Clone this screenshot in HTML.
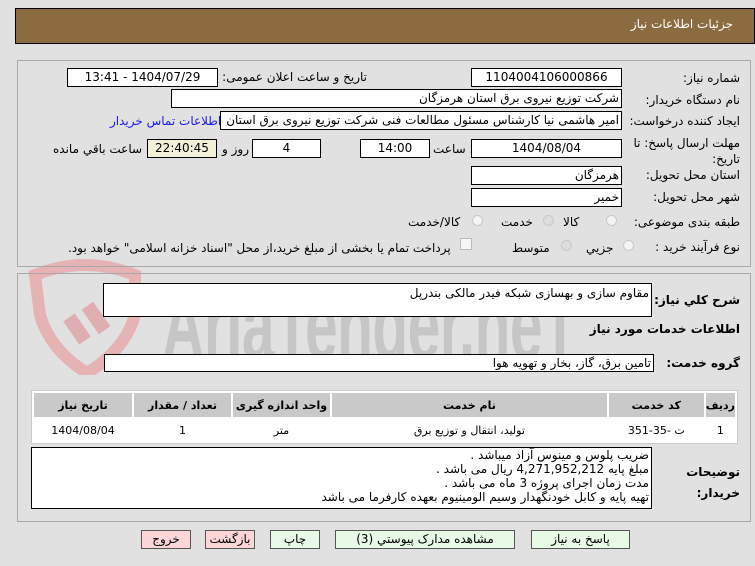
<!DOCTYPE html>
<html><head><meta charset="utf-8">
<style>
body{margin:0;width:755px;height:566px;background:#e1e1e1;position:relative;overflow:hidden;font-family:Tahoma,"DejaVu Sans","Liberation Sans",sans-serif;font-size:12px;color:#000}
.a{position:absolute}
.box{position:absolute;background:#fff;border:1px solid #000;box-sizing:border-box;direction:rtl;text-align:center;line-height:16px;font-size:12px;white-space:nowrap;overflow:hidden}
.l{position:absolute;direction:rtl;white-space:nowrap;font-size:12px}
.panel{position:absolute;border:1px solid #a8a8a8;box-sizing:border-box}
.rad{position:absolute;width:11px;height:11px;border:1px solid #c8c8c8;border-radius:50%;background:#f4f4f4;box-sizing:border-box}
.btn{position:absolute;border:1px solid #555;box-sizing:border-box;text-align:center;line-height:17px;font-size:12px;direction:rtl}
table{border-collapse:separate;border-spacing:2px;position:absolute;background:#fff;border:1px solid #c8c8c8}
td{text-align:center;font-size:11px;height:22px;padding:0}
th{background:#c9c9c9;font-size:11px;height:24px;padding:0}
</style></head><body>
<div class="a" style="left:15px;top:8px;width:740px;height:36px;background:#8b6b40;border:1px solid #000;box-sizing:border-box"></div>
<div class="l" style="right:22px;top:17px;color:#fff">جزئیات اطلاعات نیاز</div>

<!-- watermark -->
<svg class="a" style="left:25px;top:255px" width="130" height="120" viewBox="0 0 130 120">
<path d="M10 20 Q60 0 110 20 L110 60 Q100 95 62 118 Q25 95 15 60 Z" fill="none" stroke="#e6b3b5" stroke-width="12"/>
<rect x="45" y="60" width="14" height="28" fill="#dfaeb0" transform="rotate(-35 52 74)"/>
<rect x="64" y="48" width="14" height="30" fill="#dfaeb0" transform="rotate(-35 71 63)"/>
</svg>
<div class="a" style="left:162px;top:276px;font-family:'Liberation Sans',sans-serif;font-size:98px;line-height:1;font-weight:bold;color:#c6c6c6;letter-spacing:-1px;transform:scaleX(0.6);transform-origin:left top">AriaTender.neT</div>

<div class="panel" style="left:17px;top:60px;width:734px;height:207px"></div>
<div class="l" style="right:15px;top:71px">شماره نیاز:</div>
<div class="box" style="left:471px;top:68px;width:151px;height:19px">1104004106000866</div>
<div class="l" style="right:388px;top:70px">تاریخ و ساعت اعلان عمومی:</div>
<div class="box" style="left:67px;top:68px;width:151px;height:19px">1404/07/29 - 13:41</div>

<div class="l" style="right:15px;top:93px">نام دستگاه خریدار:</div>
<div class="box" style="left:171px;top:89px;width:451px;height:19px;text-align:right;padding-right:2px">شرکت توزیع نیروی برق استان هرمزگان</div>

<div class="l" style="right:15px;top:114px">ایجاد کننده درخواست:</div>
<div class="box" style="left:220px;top:111px;width:402px;height:19px;text-align:right;padding-right:2px">امیر هاشمی نیا کارشناس مسئول مطالعات فنی شرکت توزیع نیروی برق استان</div>
<div class="l" style="left:110px;top:114px;color:#1a1ae6">اطلاعات تماس خریدار</div>

<div class="l" style="right:15px;top:136px">مهلت ارسال پاسخ: تا</div>
<div class="l" style="right:15px;top:152px">تاریخ:</div>
<div class="box" style="left:471px;top:139px;width:151px;height:19px">1404/08/04</div>
<div class="l" style="left:433px;top:142px">ساعت</div>
<div class="box" style="left:360px;top:139px;width:70px;height:19px">14:00</div>
<div class="box" style="left:252px;top:139px;width:69px;height:19px">4</div>
<div class="l" style="left:222px;top:142px">روز و</div>
<div class="box" style="left:147px;top:139px;width:70px;height:19px;background:#f2f0d6">22:40:45</div>
<div class="l" style="left:53px;top:142px">ساعت باقي مانده</div>

<div class="l" style="right:15px;top:168px">استان محل تحویل:</div>
<div class="box" style="left:471px;top:166px;width:151px;height:19px;text-align:right;padding-right:2px">هرمزگان</div>
<div class="l" style="right:15px;top:190px">شهر محل تحویل:</div>
<div class="box" style="left:471px;top:188px;width:151px;height:19px;text-align:right;padding-right:2px">خمیر</div>

<div class="l" style="right:15px;top:215px">طبقه بندی موضوعی:</div>
<div class="rad" style="left:606px;top:215px"></div><div class="l" style="left:563px;top:215px">کالا</div>
<div class="rad" style="left:543px;top:215px;background:#ddd"></div><div class="l" style="left:501px;top:215px">خدمت</div>
<div class="rad" style="left:472px;top:215px"></div><div class="l" style="left:408px;top:215px">کالا/خدمت</div>

<div class="l" style="right:15px;top:240px">نوع فرآیند خرید :</div>
<div class="rad" style="left:623px;top:240px"></div><div class="l" style="left:586px;top:241px">جزيي</div>
<div class="rad" style="left:561px;top:240px;background:#ddd"></div><div class="l" style="left:512px;top:241px">متوسط</div>
<div class="a" style="left:460px;top:238px;width:12px;height:12px;border:1px solid #bbb;background:#f6f6f6;box-sizing:border-box"></div>
<div class="l" style="left:68px;top:241px">پرداخت تمام یا بخشی از مبلغ خرید،از محل "اسناد خزانه اسلامی" خواهد بود.</div>

<div class="panel" style="left:17px;top:273px;width:734px;height:249px"></div>
<div class="l" style="right:15px;top:293px;font-weight:bold;font-size:12px">شرح کلي نیاز:</div>
<div class="box" style="left:103px;top:283px;width:549px;height:34px;text-align:right;padding-right:2px;line-height:18px">مقاوم سازی و بهسازی شبکه فیدر مالکی بندرپل</div>
<div class="l" style="right:15px;top:322px;font-weight:bold;font-size:12px">اطلاعات خدمات مورد نیاز</div>
<div class="l" style="right:15px;top:356px;font-weight:bold;font-size:12px">گروه خدمت:</div>
<div class="box" style="left:104px;top:354px;width:550px;height:18px;text-align:right;padding-right:2px">تامین برق، گاز، بخار و تهویه هوا</div>

<table style="left:31px;top:390px;width:707px" dir="rtl">
<tr><th style="width:27px">ردیف</th><th style="width:95px">کد خدمت</th><th>نام خدمت</th><th style="width:97px">واحد اندازه گیری</th><th style="width:97px">تعداد / مقدار</th><th style="width:98px">تاریخ نیاز</th></tr>
<tr><td>1</td><td>ت -35-351</td><td>تولید، انتقال و توزیع برق</td><td>متر</td><td>1</td><td>1404/08/04</td></tr>
</table>

<div class="l" style="right:15px;top:462px;font-weight:bold;font-size:12px;line-height:21px;text-align:right">توضیحات<br>خریدار:</div>
<div class="box" style="left:31px;top:447px;width:621px;height:62px;text-align:right;padding-right:2px;line-height:14px;font-size:12px">ضریب پلوس و مینوس آزاد میباشد .<br>مبلغ پایه 4,271,952,212  ریال می باشد .<br>مدت زمان اجرای پروژه 3 ماه می باشد .<br>تهیه پایه و کابل خودنگهدار وسیم الومینیوم بعهده کارفرما می باشد</div>

<div class="btn" style="left:531px;top:530px;width:99px;height:19px;background:#e6fae6">پاسخ به نیاز</div>
<div class="btn" style="left:335px;top:530px;width:180px;height:19px;background:#e6fae6">مشاهده مدارک پیوستي (3)</div>
<div class="btn" style="left:270px;top:530px;width:50px;height:19px;background:#e6fae6">چاپ</div>
<div class="btn" style="left:205px;top:530px;width:50px;height:19px;background:#fbd6d6">بازگشت</div>
<div class="btn" style="left:141px;top:530px;width:50px;height:19px;background:#fbd6d6">خروج</div>
</body></html>
